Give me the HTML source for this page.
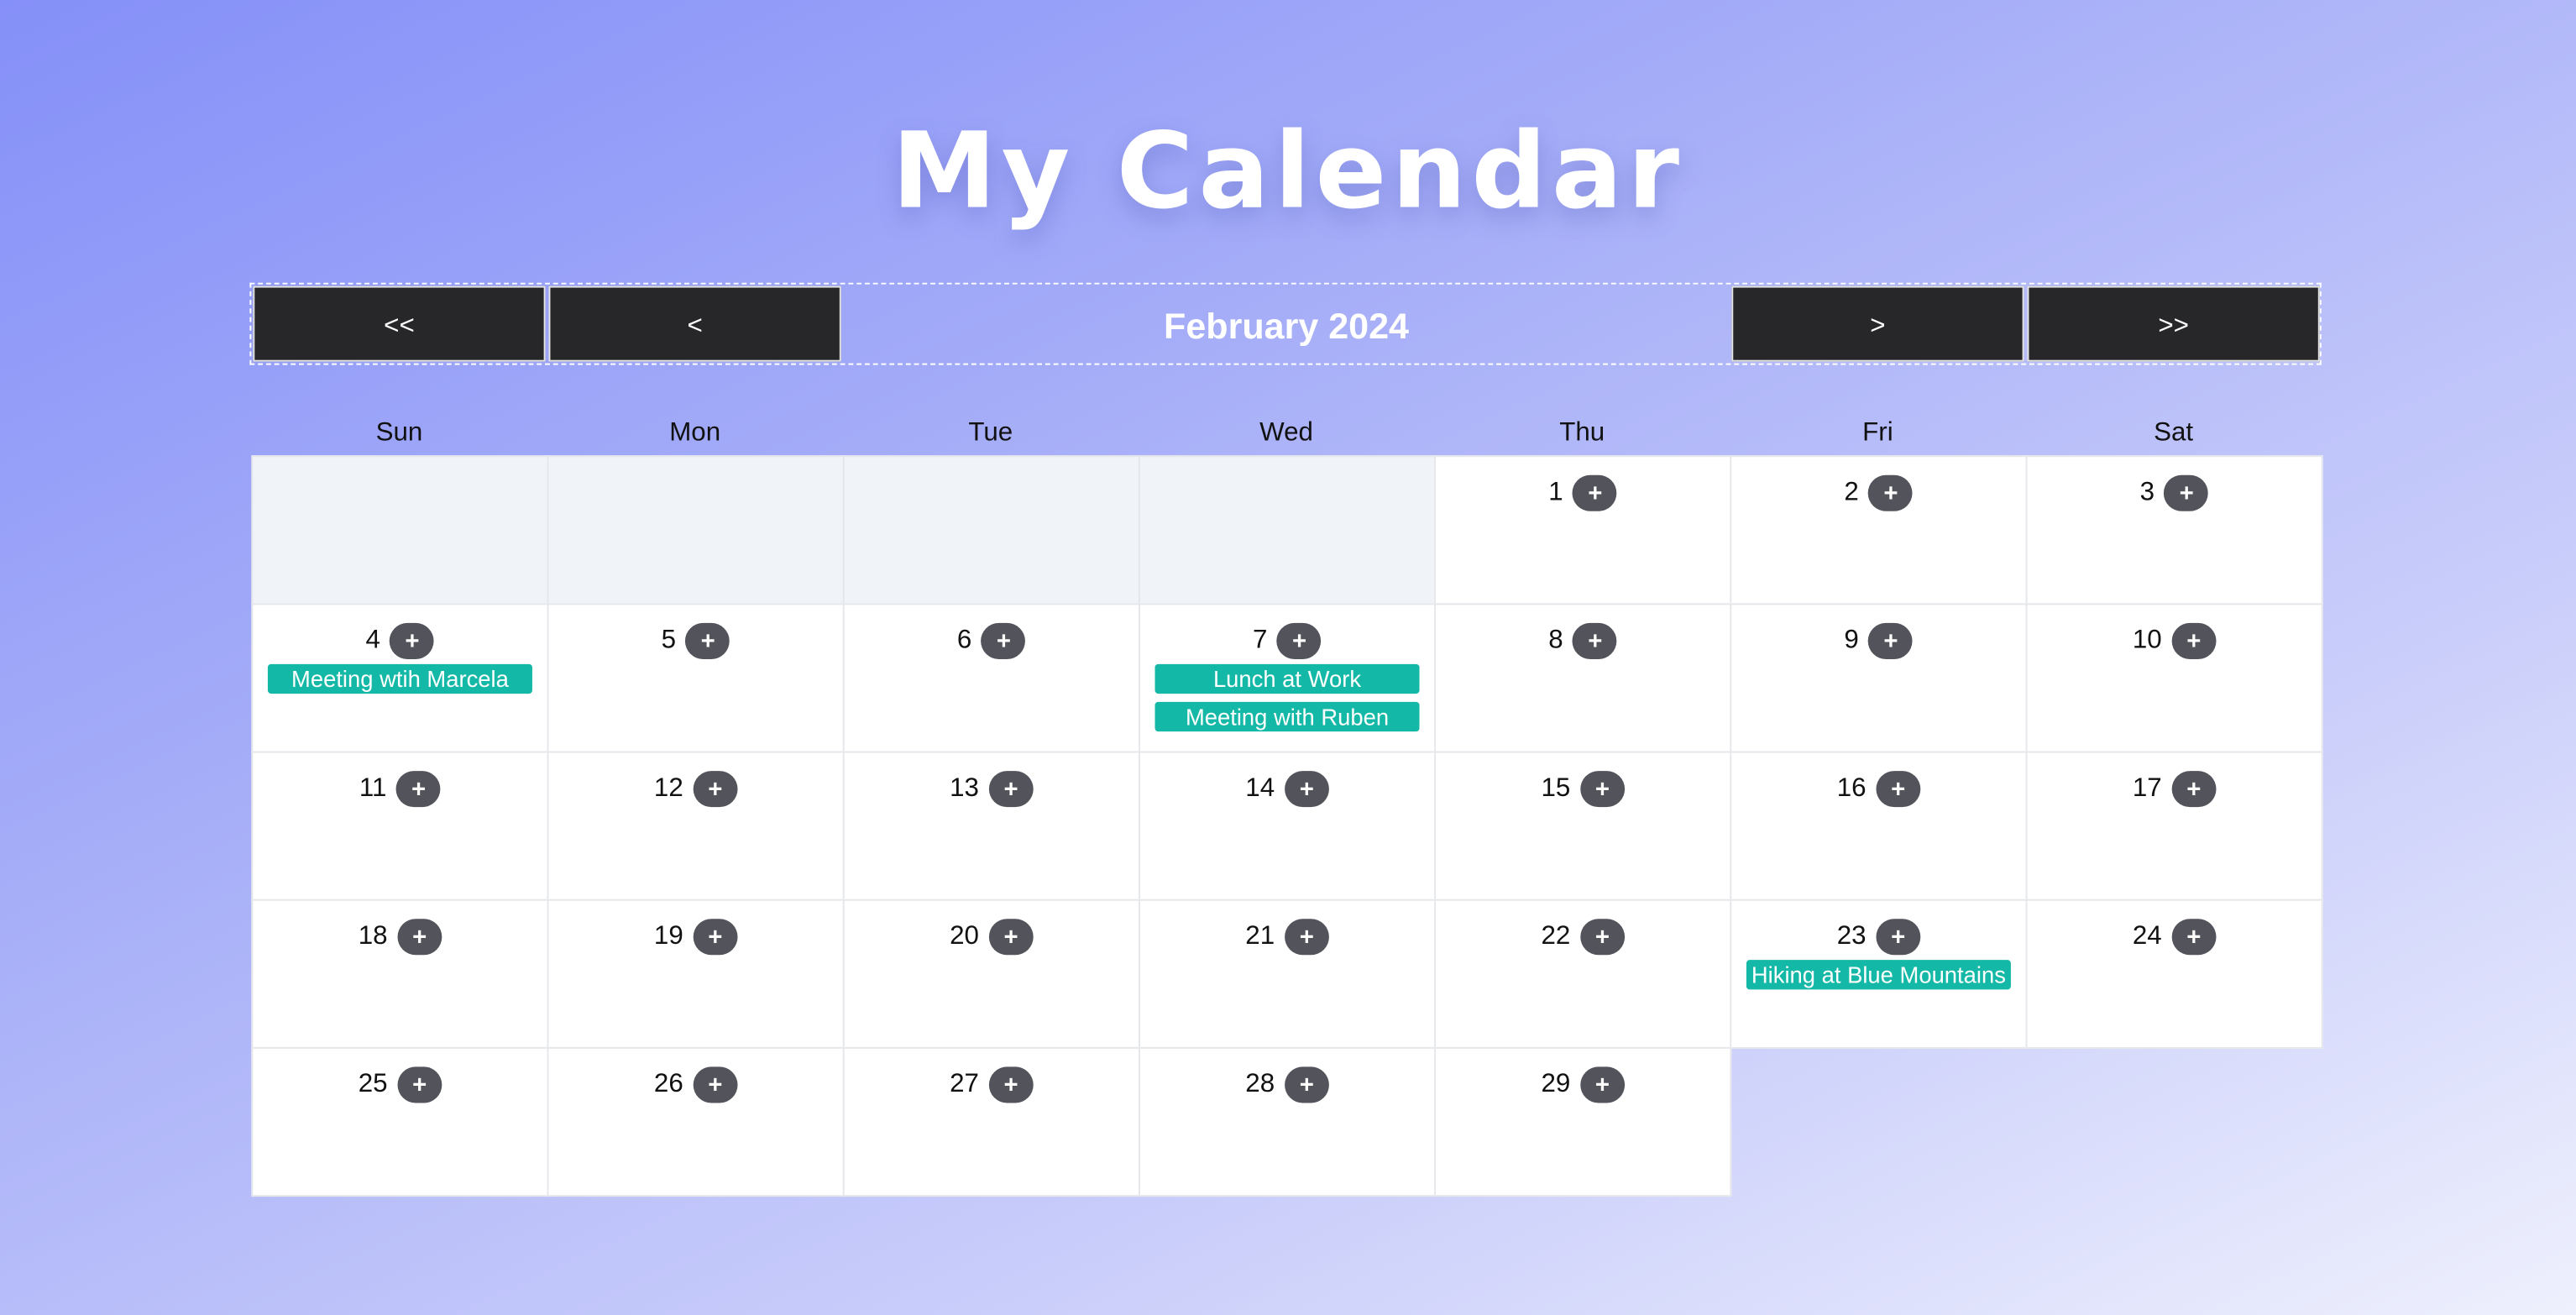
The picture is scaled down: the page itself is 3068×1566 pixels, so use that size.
<!DOCTYPE html>
<html><head><meta charset="utf-8"><style>
html,body{margin:0;padding:0;width:3068px;height:1566px;overflow:hidden}
body{background:linear-gradient(155deg,#8590f8 0%,#a5adf8 35%,#c9cdfa 70%,#eef0fd 100%);font-family:"Liberation Sans","DejaVu Sans",sans-serif}
#w{position:absolute;left:0;top:0;width:1568px;height:800px;transform:scale(1.95663,1.9575);transform-origin:0 0}
h1{position:absolute;left:0;right:0;top:60px;margin:0;text-align:center;color:#fff;font-family:"DejaVu Sans",sans-serif;font-size:64px;font-weight:bold;letter-spacing:3px;line-height:90px;text-shadow:0 6px 14px rgba(80,90,180,.35)}
.nav{position:absolute;left:152px;top:172px;width:1259px;height:48px;border:1px dashed #fff}
.btn{position:absolute;top:1px;width:176px;height:44px;background:#27272a;border:1px solid #e5e5e5;color:#fff;font-size:16px;text-align:center;line-height:47px}
.mt{position:absolute;left:360px;width:540px;top:1px;line-height:50px;text-align:center;color:#fff;font-size:22px;font-weight:bold}
.dh{position:absolute;top:255px;width:180px;text-align:center;font-size:16px;color:#111}
.c{position:absolute;width:179px;height:89px;background:#fff;border:1px solid #e5e7eb}
.c.e{background:#f0f3f8}
.n{position:absolute;top:11px;left:0;right:0;text-align:center;font-size:16px;color:#111;line-height:20px}
.n b{display:inline-block;width:27px;height:22px;border-radius:11px;background:#53535c;color:#fff;font-weight:bold;font-size:15px;line-height:24px;margin-left:6px;vertical-align:middle}
.ev{position:absolute;left:9px;width:161px;height:18px;background:#14b8a6;border-radius:2px;color:#fff;font-size:14px;line-height:18px;text-align:center;white-space:nowrap;overflow:hidden}
</style></head><body><div id="w">
<h1>My Calendar</h1>
<div class="nav">
<div class="btn" style="left:1px">&lt;&lt;</div>
<div class="btn" style="left:181px">&lt;</div>
<div class="mt">February 2024</div>
<div class="btn" style="left:901px">&gt;</div>
<div class="btn" style="left:1081px">&gt;&gt;</div>
</div>
<div class="dh" style="left:153px">Sun</div><div class="dh" style="left:333px">Mon</div><div class="dh" style="left:513px">Tue</div><div class="dh" style="left:693px">Wed</div><div class="dh" style="left:873px">Thu</div><div class="dh" style="left:1053px">Fri</div><div class="dh" style="left:1233px">Sat</div>
<div class="c e" style="left:153px;top:277px"></div>
<div class="c e" style="left:333px;top:277px"></div>
<div class="c e" style="left:513px;top:277px"></div>
<div class="c e" style="left:693px;top:277px"></div>
<div class="c" style="left:873px;top:277px"><div class="n">1<b>+</b></div></div>
<div class="c" style="left:1053px;top:277px"><div class="n">2<b>+</b></div></div>
<div class="c" style="left:1233px;top:277px"><div class="n">3<b>+</b></div></div>
<div class="c" style="left:153px;top:367px"><div class="n">4<b>+</b></div><div class="ev" style="top:36px">Meeting wtih Marcela</div></div>
<div class="c" style="left:333px;top:367px"><div class="n">5<b>+</b></div></div>
<div class="c" style="left:513px;top:367px"><div class="n">6<b>+</b></div></div>
<div class="c" style="left:693px;top:367px"><div class="n">7<b>+</b></div><div class="ev" style="top:36px">Lunch at Work</div><div class="ev" style="top:59px">Meeting with Ruben</div></div>
<div class="c" style="left:873px;top:367px"><div class="n">8<b>+</b></div></div>
<div class="c" style="left:1053px;top:367px"><div class="n">9<b>+</b></div></div>
<div class="c" style="left:1233px;top:367px"><div class="n">10<b>+</b></div></div>
<div class="c" style="left:153px;top:457px"><div class="n">11<b>+</b></div></div>
<div class="c" style="left:333px;top:457px"><div class="n">12<b>+</b></div></div>
<div class="c" style="left:513px;top:457px"><div class="n">13<b>+</b></div></div>
<div class="c" style="left:693px;top:457px"><div class="n">14<b>+</b></div></div>
<div class="c" style="left:873px;top:457px"><div class="n">15<b>+</b></div></div>
<div class="c" style="left:1053px;top:457px"><div class="n">16<b>+</b></div></div>
<div class="c" style="left:1233px;top:457px"><div class="n">17<b>+</b></div></div>
<div class="c" style="left:153px;top:547px"><div class="n">18<b>+</b></div></div>
<div class="c" style="left:333px;top:547px"><div class="n">19<b>+</b></div></div>
<div class="c" style="left:513px;top:547px"><div class="n">20<b>+</b></div></div>
<div class="c" style="left:693px;top:547px"><div class="n">21<b>+</b></div></div>
<div class="c" style="left:873px;top:547px"><div class="n">22<b>+</b></div></div>
<div class="c" style="left:1053px;top:547px"><div class="n">23<b>+</b></div><div class="ev" style="top:36px">Hiking at Blue Mountains</div></div>
<div class="c" style="left:1233px;top:547px"><div class="n">24<b>+</b></div></div>
<div class="c" style="left:153px;top:637px"><div class="n">25<b>+</b></div></div>
<div class="c" style="left:333px;top:637px"><div class="n">26<b>+</b></div></div>
<div class="c" style="left:513px;top:637px"><div class="n">27<b>+</b></div></div>
<div class="c" style="left:693px;top:637px"><div class="n">28<b>+</b></div></div>
<div class="c" style="left:873px;top:637px"><div class="n">29<b>+</b></div></div>
</div></body></html>
